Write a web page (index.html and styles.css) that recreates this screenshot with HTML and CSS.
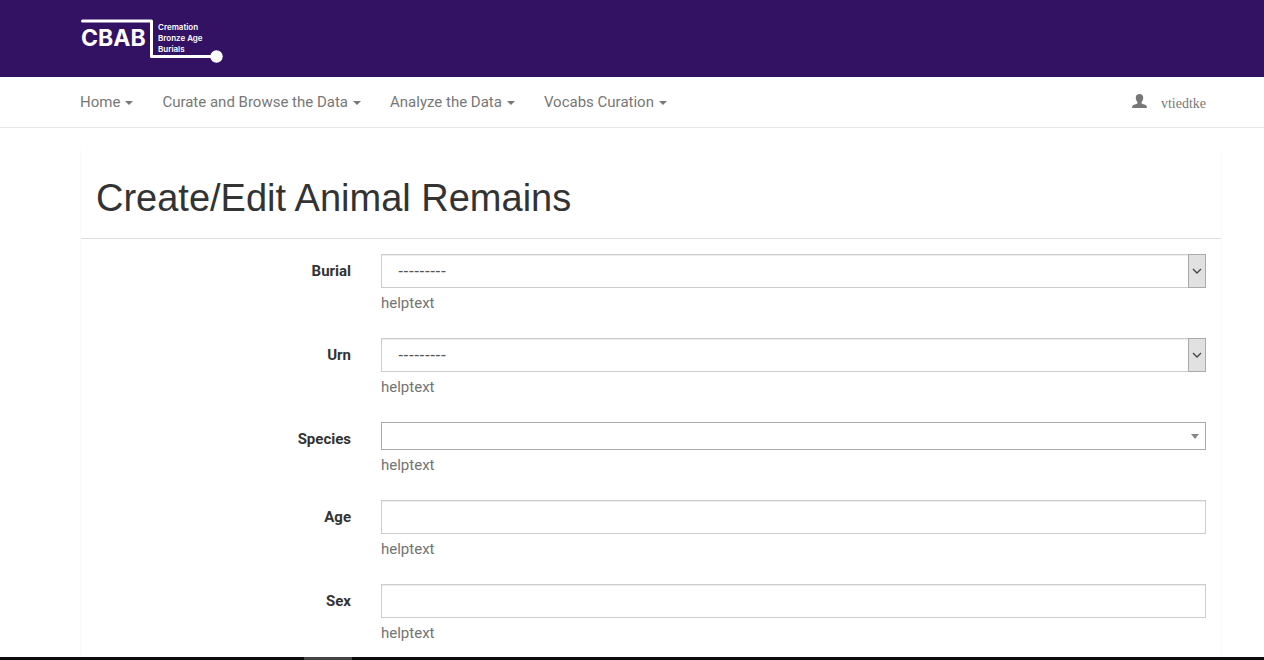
FILE: index.html
```html
<!DOCTYPE html>
<html lang="en">
<head>
<meta charset="utf-8">
<meta name="viewport" content="width=device-width, initial-scale=1">
<title>Create/Edit Animal Remains</title>
<link rel="stylesheet" href="styles.css">
</head>
<body>
<header class="masthead">
  <a class="brand" href="#" aria-label="CBAB home">
    <svg class="logo" viewBox="0 0 144 46" role="img" aria-label="Cremation Bronze Age Burials">
      <path class="logo-line" d="M1.500 4H70.500V39.500H135"/>
      <circle cx="135.500" cy="39.500" r="6.200"/>
      <text class="logo-name" x="0" y="29">CBAB</text>
      <text class="logo-tag" x="77" y="13">Cremation</text>
      <text class="logo-tag" x="77" y="24">Bronze Age</text>
      <text class="logo-tag" x="77" y="35">Burials</text>
    </svg>
  </a>
</header>
<nav class="navbar">
  <div class="menus">
    <button class="menu" type="button">Home<span class="caret"></span></button>
    <button class="menu" type="button">Curate and Browse the Data<span class="caret"></span></button>
    <button class="menu" type="button">Analyze the Data<span class="caret"></span></button>
    <button class="menu" type="button">Vocabs Curation<span class="caret"></span></button>
  </div>
  <a class="user" href="#">
    <svg class="user-icon" viewBox="0 0 15 14" aria-hidden="true"><path d="M7.500 0C5.200 0 3.800 1.500 3.800 3.500C3.800 5.500 4.500 7.200 5.500 8.200V9.200C4.500 10.200 1 10.500 .4 12L0 14H15L14.600 12C14 10.500 10.500 10.200 9.500 9.200V8.200C10.500 7.200 11.200 5.500 11.200 3.500C11.200 1.500 9.800 0 7.500 0Z"/></svg>
    <span>vtiedtke</span>
  </a>
</nav>
<main class="panel">
  <h1 class="title">Create/Edit Animal Remains</h1>
  <form class="form">
    <div class="row">
      <label class="label" for="burial">Burial</label>
      <div class="field">
        <div class="picker">
          <select class="control" id="burial"><option>---------</option></select>
          <span class="arrow"><svg viewBox="0 0 10 6" aria-hidden="true"><path d="M1 1L5 5L9 1"/></svg></span>
        </div>
        <p class="help">helptext</p>
      </div>
    </div>
    <div class="row">
      <label class="label" for="urn">Urn</label>
      <div class="field">
        <div class="picker">
          <select class="control" id="urn"><option>---------</option></select>
          <span class="arrow"><svg viewBox="0 0 10 6" aria-hidden="true"><path d="M1 1L5 5L9 1"/></svg></span>
        </div>
        <p class="help">helptext</p>
      </div>
    </div>
    <div class="row">
      <label class="label" for="species">Species</label>
      <div class="field">
        <div class="picker">
          <select class="control compact" id="species"><option></option></select>
          <span class="triangle"></span>
        </div>
        <p class="help">helptext</p>
      </div>
    </div>
    <div class="row">
      <label class="label" for="age">Age</label>
      <div class="field">
        <input class="control" id="age" type="text">
        <p class="help">helptext</p>
      </div>
    </div>
    <div class="row">
      <label class="label" for="sex">Sex</label>
      <div class="field">
        <input class="control" id="sex" type="text">
        <p class="help">helptext</p>
      </div>
    </div>
  </form>
</main>
<footer class="taskbar"><span class="task"></span></footer>
</body>
</html>
```
FILE: styles.css
```css
* { box-sizing: border-box; }
body {
  margin: 0;
  min-height: 100vh;
  display: flex;
  flex-direction: column;
  background: #fff;
  color: #333;
  font: 15px/20px Roboto, sans-serif;
}
.masthead {
  display: flex;
  align-items: flex-start;
  height: 77px;
  padding: 17px 43px 0 81px;
  background: #331163;
}
.brand { display: block; }
.logo { display: block; width: 144px; height: 46px; fill: #fff; }
.logo-line { fill: none; stroke: #fff; stroke-width: 3; stroke-linejoin: round; stroke-linecap: round; }
.logo-name { font: bold 23px Inter, sans-serif; }
.logo-tag { font: 600 8px Inter, sans-serif; }
.navbar {
  display: flex;
  justify-content: space-between;
  align-items: center;
  height: 51px;
  padding: 0 58px 0 80px;
  border-bottom: 1px solid #e7e7e7;
}
.menus { display: flex; gap: 29px; }
.menu {
  display: flex;
  align-items: center;
  gap: 5px;
  padding: 0;
  border: 0;
  background: none;
  color: #777;
  font: inherit;
}
.caret {
  margin-top: 2px;
  border: 4px solid transparent;
  border-top-color: #777;
  border-bottom: 0;
}
.user {
  display: flex;
  align-items: center;
  gap: 14px;
  color: #777;
  font: 14px/20px "Liberation Serif", serif;
  text-decoration: none;
}
.user-icon { width: 15px; height: 14px; margin-bottom: 2px; fill: #777; }
.user span { padding-top: 3px; }
.panel {
  flex: 1;
  margin: 22px 42px 0 80px;
  border: 1px solid #fafafa;
  border-width: 0 1px;
}
.title {
  margin: 0;
  padding: 26px 15px 18px;
  border-bottom: 1px solid #ddd;
  font-family: "Liberation Sans", Arial, sans-serif;
  font-size: 38px;
  font-weight: 400;
  line-height: 44px;
}
.form { padding: 15px 15px 0; }
.row {
  display: grid;
  grid-template-columns: 255px 1fr;
  column-gap: 30px;
  padding-bottom: 15px;
}
.row:last-child { padding-bottom: 0; }
.label { padding-top: 7px; font-weight: 700; text-align: right; }
.picker { display: grid; }
.picker > * { grid-area: 1 / 1; }
.control {
  display: block;
  width: 100%;
  height: 34px;
  padding: 6px 16px;
  appearance: none;
  border: 1px solid #ccc;
  border-radius: 0;
  background: #fff;
  box-shadow: inset 0 1px 1px rgba(0, 0, 0, .075);
  color: #555;
  font: 16px/20px "Liberation Sans", Arial, sans-serif;
}
.compact { height: 28px; padding: 0 8px; border-color: #aaa; box-shadow: none; }
.arrow {
  display: flex;
  align-items: center;
  justify-content: center;
  justify-self: end;
  width: 18px;
  border: 1px solid #aaa;
  background: #e1e1e1;
  pointer-events: none;
}
.arrow svg { width: 10px; height: 6px; fill: none; stroke: #444; stroke-width: 1.300; }
.triangle {
  place-self: center end;
  margin-right: 7px;
  border: 4px solid transparent;
  border-top: 5px solid #888;
  border-bottom: 0;
  pointer-events: none;
}
.help { margin: 0; padding: 5px 0 10px; color: #737373; }
.taskbar { display: flex; height: 3px; padding-left: 304px; background: #0c0b0d; }
.task { width: 48px; background: #444; }
```
